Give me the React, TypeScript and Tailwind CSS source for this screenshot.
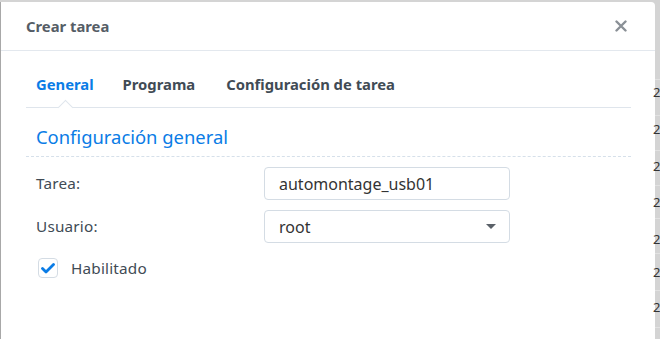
import React from "react";

const rows = [93, 130, 167, 203, 240, 273, 308];

export default function App() {
  return (
    <div
      className="relative flex w-[660px] h-[339px] overflow-hidden bg-[#d4d4d4]"
      style={{ fontFamily: '"Noto Sans", "Open Sans", sans-serif' }}
    >
      {/* dialog */}
      <div className="mt-[2px] w-[655px] shrink-0 bg-white border-l border-[#a8a8a8] rounded-tr-[4px] text-[#414b55]">
        {/* header */}
        <div className="flex items-center justify-between h-[49px] pl-[25px] pr-[28px] border-b border-[#e3e8ee]">
          <span className="text-[14.8px] font-bold text-[#555d66]">Crear tarea</span>
          <svg width="12" height="12" viewBox="0 0 12 12">
            <path d="M1.5 1.5 L10.5 10.5 M10.5 1.5 L1.5 10.5" stroke="#8a9096" strokeWidth="2.4" strokeLinecap="round" />
          </svg>
        </div>

        <div className="pl-[25px] pr-[24px]">
          {/* tabs */}
          <div className="relative flex items-center h-[57px] pt-[11px] border-b border-[#dfe5ec] text-[14.8px] font-bold">
            <span className="ml-[10px] text-[#0a7ce6]">General</span>
            <span className="ml-[29px] text-[#414b55]">Programa</span>
            <span className="ml-[31px] text-[#414b55]">Configuración de tarea</span>
            <div className="absolute left-[34px] bottom-[-6px] w-[11px] h-[11px] rotate-45 bg-white border-l border-t border-[#dfe5ec]" />
          </div>

          {/* section */}
          <div className="pt-[18px] pl-[10px] h-[48px] text-[18.4px] text-[#0a7ce6] leading-[22px]">
            Configuración general
          </div>
          <div className="border-b border-dashed border-[#d6e0ea]" />

          <div className="pl-[10px] pt-[10px] text-[15.3px] tracking-[0.2px]">
            <div className="flex items-center h-[33px]">
              <span className="w-[228px] text-[#414b55]">Tarea:</span>
              <div className="flex items-center w-[246px] h-[33px] px-[14px] border border-[#d4dce4] rounded-[4px] text-[16px] tracking-normal text-[#333]">
                automontage_usb01
              </div>
            </div>
            <div className="flex items-center h-[33px] mt-[10px]">
              <span className="w-[228px] text-[#414b55]">Usuario:</span>
              <div className="flex items-center justify-between w-[246px] h-[33px] pl-[14px] pr-[13px] border border-[#d4dce4] rounded-[4px] text-[16px] tracking-normal text-[#333]">
                <span>root</span>
                <svg width="10" height="6" viewBox="0 0 10 6">
                  <path d="M0 0 L10 0 L5 5 Z" fill="#5a6168" />
                </svg>
              </div>
            </div>
            <div className="flex items-center mt-[15px] h-[20px]">
              <div className="flex items-center justify-center w-[20px] h-[20px] ml-[2px] border border-[#d4dce4] rounded-[4px] bg-white">
                <svg width="14" height="11" viewBox="0 0 14 11">
                  <path d="M1.5 5.5 L5 9 L12.5 1.5" stroke="#0a7ce6" strokeWidth="2.8" fill="none" strokeLinecap="round" strokeLinejoin="round" />
                </svg>
              </div>
              <span className="ml-[13px] text-[#414b55]">Habilitado</span>
            </div>
          </div>
        </div>
      </div>

      {/* background table glimpse */}
      <div className="relative flex-1">
        {[79, 115, 150, 185, 218, 253, 290, 327].map((y) => (
          <div key={y} className="absolute left-0 right-0 h-px bg-[#e2e2e2]" style={{ top: y }} />
        ))}
        {rows.map((y) => (
          <span
            key={y}
            className="absolute left-[-2px] text-[13px] leading-none text-[#333]"
            style={{ top: y - 7 }}
          >
            2
          </span>
        ))}
      </div>
    </div>
  );
}
